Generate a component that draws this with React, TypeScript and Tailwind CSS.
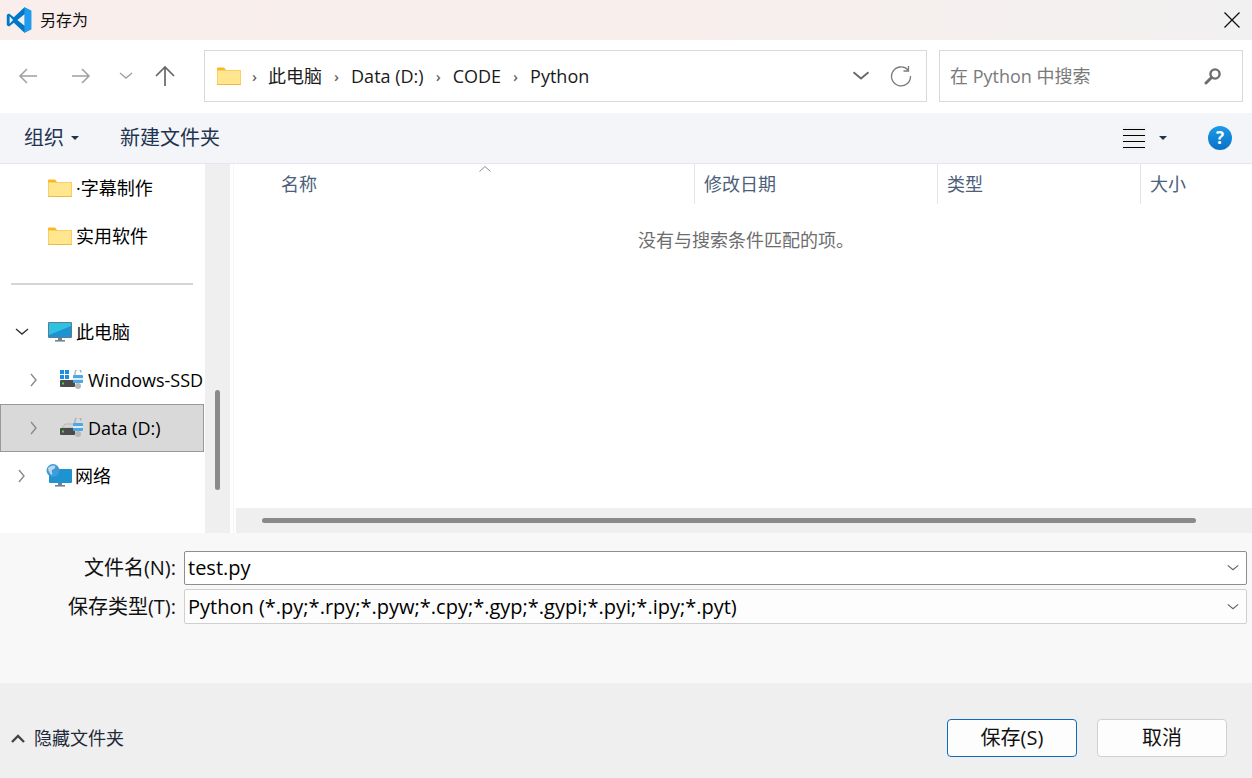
import React from "react";

const font = "font-['Open_Sans','Noto_Sans_CJK_SC',sans-serif]";

const Chevron = ({ dir, className }: { dir: "right" | "down" | "up"; className?: string }) => {
  const d = dir === "right" ? "M5 2l5 6-5 6" : dir === "down" ? "M2 5l6 5 6-5" : "M2 11l6-5 6 5";
  return (
    <svg width="16" height="16" viewBox="0 0 16 16" fill="none" stroke="currentColor" strokeWidth="1.4" className={className}>
      <path d={d} />
    </svg>
  );
};

const Folder = ({ size = 24 }: { size?: number }) => (
  <svg width={size} height={(size * 18) / 24} viewBox="0 0 24 18">
    <path d="M0 1.5A1 1 0 0 1 1 .5h6l2 2.5h-9z" fill="#fbb81f" />
    <rect x="0" y="3" width="24" height="15" rx="0.5" fill="#f5b93a" />
    <rect x="0.5" y="3.5" width="23" height="13.5" fill="#ffe68f" />
  </svg>
);

const Monitor = () => (
  <svg width="24" height="20" viewBox="0 0 24 20">
    <rect x="0" y="0" width="24" height="16" rx="1" fill="#5a7d93" />
    <rect x="1" y="1" width="22" height="14" fill="#1f93cf" />
    <path d="M1 1h22v3L1 13z" fill="#35d0e6" opacity="0.75" />
    <rect x="10" y="16" width="4" height="2" fill="#6f8594" />
    <rect x="7" y="18" width="10" height="1.6" fill="#6f8594" />
  </svg>
);

const Drive = ({ windows }: { windows?: boolean }) => (
  <svg width="24" height="20" viewBox="0 0 24 20">
    {windows ? (
      <g fill="#1c8fe0">
        <rect x="0" y="0" width="4" height="4" />
        <rect x="5" y="0" width="4" height="4" />
        <rect x="0" y="5" width="4" height="4" />
        <rect x="5" y="5" width="4" height="4" />
      </g>
    ) : (
      <path d="M2 10l3-4h9v4z" fill="#d5d5d5" stroke="#999" strokeWidth="0.5" />
    )}
    <rect x="0" y="10" width="15" height="7" rx="1" fill="#4b4b4b" />
    <rect x="2" y="12.5" width="2" height="2" fill="#3ed84a" />
    <path d="M15 5V2.5a3 3 0 0 1 6 0" fill="none" stroke="#a8a8a8" strokeWidth="1.2" />
    <rect x="13" y="5" width="10" height="8" rx="1" fill="#4aa8e6" />
    <rect x="13" y="8" width="10" height="2" fill="#dfeaf2" />
    <circle cx="18" cy="16" r="3" fill="#b8b8b8" />
  </svg>
);

const Globe = () => (
  <svg width="26" height="24" viewBox="0 0 26 24">
    <rect x="3" y="5" width="23" height="14" rx="1" fill="#1f93cf" />
    <rect x="12" y="19" width="4" height="2" fill="#6f8594" />
    <rect x="9" y="21" width="10" height="1.6" fill="#6f8594" />
    <circle cx="7" cy="6.5" r="6.5" fill="#3f9bd8" />
    <path d="M2 4c2-2 5-3 7-2 1 2-1 3-3 4-1 2 1 3 0 5-2-1-4-4-4-7z" fill="#bcd9ec" />
  </svg>
);

const VsCode = () => (
  <svg width="26" height="26" viewBox="0 0 100 100">
    <path d="M71 99 97 86V14L71 1 30 39 12 25 3 30v40l9 5 18-14z" fill="#0078c8" />
    <path d="M71 99 97 86V14L71 1z" fill="#1f9cf0" />
    <path d="M71 27 40 50l31 23z" fill="#fff" opacity="0" />
    <path d="M71 28 44 50l27 22zM14 36v28l13-14z" fill="#f4f0ef" />
  </svg>
);

const TreeRow = ({
  indent,
  chevron,
  icon,
  label,
  selected,
}: {
  indent: string;
  chevron?: "right" | "down";
  icon: React.ReactNode;
  label: string;
  selected?: boolean;
}) => (
  <div
    className={`flex h-12 items-center whitespace-nowrap overflow-hidden text-[18px] text-black ${indent} ${
      selected ? "bg-[#d9d9d9] border border-[#999999] w-[204px]" : "w-[205px]"
    }`}
  >
    {chevron && <Chevron dir={chevron} className={`shrink-0 ${chevron === "down" ? "text-[#333333]" : "text-[#8a8a8a]"}`} />}
    {icon}
    <span>{label}</span>
  </div>
);

export default function App() {
  return (
    <div className={`flex h-[778px] w-[1252px] flex-col overflow-hidden bg-white ${font}`}>
      {/* title bar */}
      <div className="flex h-10 items-center bg-gradient-to-r from-[#f9eeec] via-[#f8eeec] to-[#f2f1f1] pl-[6px] pr-[11px]">
        <VsCode />
        <span className="ml-2 text-[16px] text-[#111111]">另存为</span>
        <svg width="18" height="18" viewBox="0 0 18 18" className="ml-auto" stroke="#111111" strokeWidth="1.3">
          <path d="M1.5 1.5l15 15M16.5 1.5l-15 15" />
        </svg>
      </div>

      {/* nav row */}
      <div className="flex h-[73px] items-center bg-white pb-[1px]">
        <div className="flex w-[204px] items-center text-[#a0a0a0]">
          <svg width="20" height="20" viewBox="0 0 20 20" fill="none" stroke="currentColor" strokeWidth="1.5" className="ml-[18px]">
            <path d="M19 10H2M9 3l-7 7 7 7" />
          </svg>
          <svg width="20" height="20" viewBox="0 0 20 20" fill="none" stroke="currentColor" strokeWidth="1.5" className="ml-[33px]">
            <path d="M1 10h17M11 3l7 7-7 7" />
          </svg>
          <Chevron dir="down" className="ml-[27px]" />
          <svg width="20" height="22" viewBox="0 0 20 22" fill="none" stroke="#666666" strokeWidth="1.7" className="ml-[21px]">
            <path d="M10 21V2M1 11l9-9 9 9" />
          </svg>
        </div>
        <div className="flex h-[52px] w-[723px] items-center border border-[#d9d9d9] pl-[12px] text-[18px] text-[#1a1a1a]">
          <Folder />
          <span className="ml-[11px] text-[15px] font-semibold text-[#666666]">›</span>
          <span className="ml-[11px]">此电脑</span>
          <span className="ml-[12px] text-[15px] font-semibold text-[#666666]">›</span>
          <span className="ml-[12px]">Data (D:)</span>
          <span className="ml-[12px] text-[15px] font-semibold text-[#666666]">›</span>
          <span className="ml-[12px]">CODE</span>
          <span className="ml-[12px] text-[15px] font-semibold text-[#666666]">›</span>
          <span className="ml-[12px]">Python</span>
          <Chevron dir="down" className="ml-auto h-5 w-5 text-[#666666]" />
          <svg width="22" height="22" viewBox="0 0 22 22" fill="none" stroke="#7a7a7a" strokeWidth="1.3" className="ml-[19px] mr-[14px]">
            <path d="M18 5a9.5 9.5 0 1 0 2.5 6" />
            <path d="M18.5 1v5h-5" />
          </svg>
        </div>
        <div className="ml-3 flex h-[52px] w-[304px] items-center border border-[#d9d9d9] pl-[10px] pr-[20px] text-[18px] text-[#7a7a7a]">
          <span>在 Python 中搜索</span>
          <svg width="18" height="18" viewBox="0 0 18 18" fill="none" stroke="#6e6e6e" className="ml-auto">
            <circle cx="11" cy="7" r="4.6" strokeWidth="2.4" />
            <path d="M7.5 10.5 2 16" strokeWidth="3" strokeLinecap="round" />
          </svg>
        </div>
      </div>

      {/* toolbar */}
      <div className="flex h-[51px] items-center border-b border-[#e5e7ea] bg-[#f3f5f8] pl-6 text-[20px] text-[#1f3350]">
        <span>组织</span>
        <span className="ml-[7px] h-0 w-0 border-x-[4px] border-t-[4px] border-x-transparent border-t-[#1f3350]" />
        <span className="ml-[41px]">新建文件夹</span>
        <div className="ml-auto flex h-6 w-6 flex-col justify-center gap-[5px] bg-[#f0f1f3] px-[1px]">
          <span className="h-[1px] bg-black" />
          <span className="h-[1px] bg-black" />
          <span className="h-[1px] bg-black" />
          <span className="h-[1px] bg-black" />
        </div>
        <span className="ml-[13px] h-0 w-0 border-x-[4px] border-t-[4px] border-x-transparent border-t-[#1f3350]" />
        <span className="ml-[41px] mr-5 flex h-6 w-6 items-center justify-center rounded-full bg-gradient-to-b from-[#1c9be8] to-[#0b70c6] text-[17px] font-bold text-white">
          ?
        </span>
      </div>

      {/* body */}
      <div className="flex h-[369px]">
        <div className="w-[205px] shrink-0 bg-white">
          <TreeRow indent="pl-[48px]" icon={<span className="mr-[4px] flex"><Folder /></span>} label="·字幕制作" />
          <TreeRow indent="pl-[48px]" icon={<span className="mr-[4px] flex"><Folder /></span>} label="实用软件" />
          <div className="flex h-12 items-center pl-[11px]">
            <div className="h-[2px] w-[182px] bg-[#d5d5d5]" />
          </div>
          <TreeRow indent="pl-[14px]" chevron="down" icon={<span className="ml-[18px] mr-[4px] flex"><Monitor /></span>} label="此电脑" />
          <TreeRow indent="pl-[26px]" chevron="right" icon={<span className="ml-[18px] mr-[4px] flex"><Drive windows /></span>} label="Windows-SSD" />
          <TreeRow indent="pl-[25px]" chevron="right" selected icon={<span className="ml-[18px] mr-[4px] flex"><Drive /></span>} label="Data (D:)" />
          <TreeRow indent="pl-[14px]" chevron="right" icon={<span className="ml-[16px] mr-[3px] flex"><Globe /></span>} label="网络" />
        </div>
        <div className="w-[25px] shrink-0 bg-[#efefef] pl-[10px] pt-[226px]">
          <div className="h-[100px] w-[5px] rounded-full bg-[#8a8a8a]" />
        </div>
        <div className="w-[3px] shrink-0 bg-white" />
        <div className="relative flex min-w-0 flex-1 flex-col border-l border-[#f5f5f5]">
          <svg width="12" height="6" viewBox="0 0 12 6" fill="none" stroke="#8c8c8c" className="absolute left-[245px] top-[2px]">
            <path d="M.5 5.5 6 .5l5.5 5" />
          </svg>
          <div className="flex h-10 text-[18px] text-[#4c607a]">
            <div className="flex w-[461px] items-center border-r border-[#e5e5e5] pl-[47px]">名称</div>
            <div className="flex w-[243px] items-center border-r border-[#e5e5e5] pl-[9px]">修改日期</div>
            <div className="flex w-[203px] items-center border-r border-[#e5e5e5] pl-[9px]">类型</div>
            <div className="flex items-center pl-[9px]">大小</div>
          </div>
          <div className="mt-[16px] pl-[404px] text-[18px] leading-[40px] text-[#6d6d6d] h-[40px]">没有与搜索条件匹配的项。</div>
          <div className="mt-auto ml-[2px] flex h-[25px] items-center bg-[#efefef] pl-[26px]">
            <div className="h-[5px] w-[934px] rounded-full bg-[#8a8a8a]" />
          </div>
        </div>
      </div>

      {/* file name form */}
      <div className="flex h-[150px] flex-col bg-[#f8f8f8] pl-[5px] pr-[5px] pt-[18px] text-[20px] text-[#111111]">
        <div className="flex items-center">
          <span className="w-[171px] text-right">文件名(N):</span>
          <div className="ml-[8px] flex h-[34px] flex-1 items-center rounded-[2px] border border-[#8e8e8e] bg-white pl-[3px] pr-[6px] text-black">
            <span>test.py</span>
            <Chevron dir="down" className="ml-auto h-[14px] w-[14px] text-[#666666]" />
          </div>
        </div>
        <div className="mt-[4px] flex items-center">
          <span className="w-[171px] text-right">保存类型(T):</span>
          <div className="ml-[8px] flex h-[35px] flex-1 items-center rounded-[2px] border border-[#d0d0d0] bg-[#fdfdfd] pl-[3px] pr-[6px] text-black">
            <span>Python (*.py;*.rpy;*.pyw;*.cpy;*.gyp;*.gypi;*.pyi;*.ipy;*.pyt)</span>
            <Chevron dir="down" className="ml-auto h-[14px] w-[14px] text-[#666666]" />
          </div>
        </div>
      </div>

      {/* footer */}
      <div className="flex h-[95px] bg-[#efefef] pr-[25px] pt-[36px]">
        <div className="flex h-[38px] items-center pl-[10px] text-[18px] text-[#1f2a3a]">
          <svg width="16" height="12" viewBox="0 0 16 12" fill="none" stroke="#444444" strokeWidth="2.4">
            <path d="M2 10l6-6 6 6" />
          </svg>
          <span className="ml-[8px]">隐藏文件夹</span>
        </div>
        <button className="ml-auto h-[38px] w-[130px] rounded-[4px] border border-[#0f6cbd] bg-[#fdfdfd] text-[20px] text-[#111111]">
          保存(S)
        </button>
        <button className="ml-5 h-[38px] w-[130px] rounded-[4px] border border-[#d0d0d0] bg-[#fdfdfd] text-[20px] text-[#111111]">
          取消
        </button>
      </div>
    </div>
  );
}
